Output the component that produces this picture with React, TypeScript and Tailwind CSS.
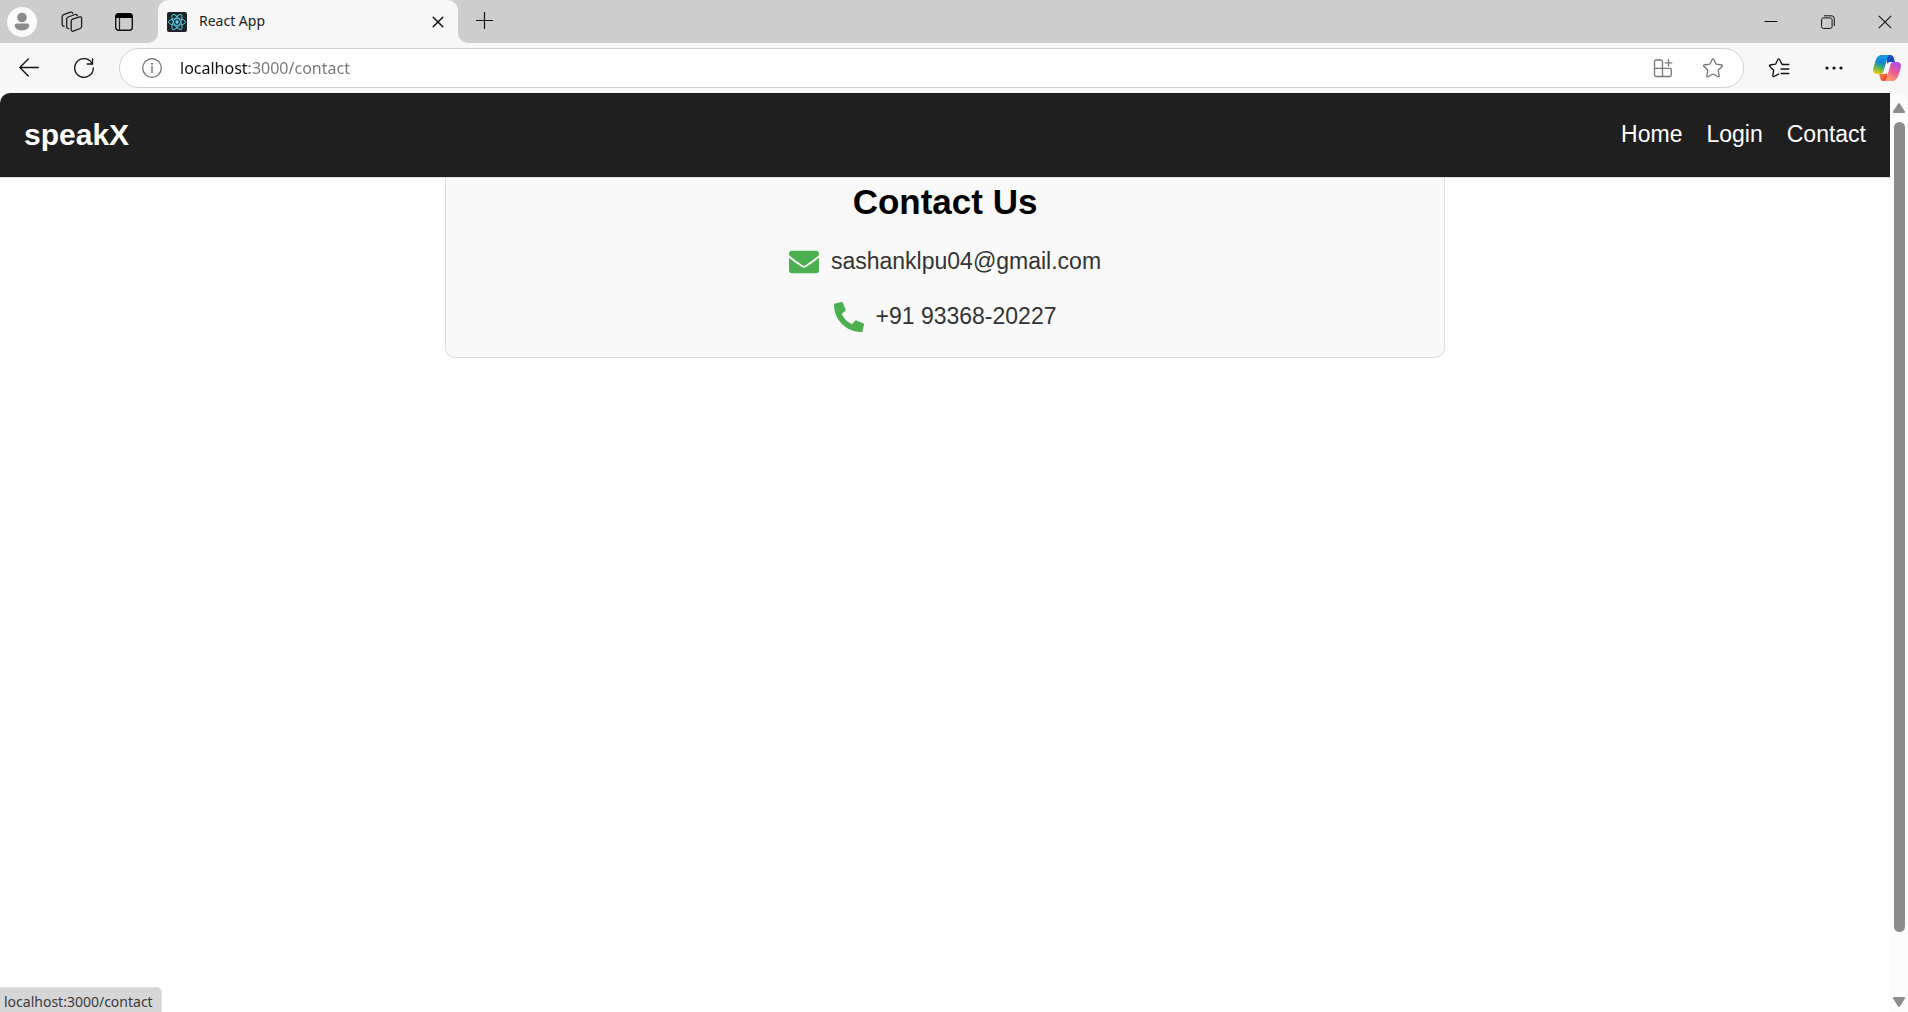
import React from "react";
import { FaEnvelope, FaPhoneAlt } from "react-icons/fa";

const iconButton = "flex shrink-0 items-center justify-center";

function WorkspacesIcon() {
  return (
    <svg width="22" height="22" viewBox="0 0 22 22" fill="none" stroke="#1b1b1b" strokeWidth="1.3" strokeLinecap="round" strokeLinejoin="round">
      <path d="M11.600 8.100l7-2.300a1.500 1.500 0 0 1 2 1.500v8.300a2 2 0 0 1-1.400 1.900l-7 2.700a1.500 1.500 0 0 1-2-1.400v-8.800a2 2 0 0 1 1.400-1.900z" />
      <path d="M7.700 17.500a1.700 1.700 0 0 1-2-1.700V7.900a2 2 0 0 1 1.400-1.900l7-2.500a1.600 1.600 0 0 1 2.200 1.200" />
      <path d="M3.200 15.200a1.700 1.700 0 0 1-2-1.700V5.600a2 2 0 0 1 1.400-1.900l7-2.500a1.600 1.600 0 0 1 2.200 1.200" />
    </svg>
  );
}

function TabActionsIcon() {
  return (
    <svg width="18" height="18" viewBox="0 0 18 18" fill="none">
      <rect x=".7" y=".7" width="16.600" height="16.600" rx="2.800" stroke="#111" strokeWidth="1.400" />
      <path d="M.5 5V3A2.500 2.500 0 0 1 3 .5h12A2.500 2.500 0 0 1 17.500 3v2z" fill="#000" />
      <path d="M4.500 5v12" stroke="#222" strokeWidth="1.200" />
    </svg>
  );
}

function ReactLogo() {
  return (
    <svg width="20" height="20" viewBox="0 0 20 20" fill="none">
      <rect width="20" height="20" rx="2" fill="#20232a" />
      <g stroke="#58c4dc" strokeWidth="1">
        <ellipse cx="10" cy="10" rx="8.500" ry="3.300" />
        <ellipse cx="10" cy="10" rx="8.500" ry="3.300" transform="rotate(60 10 10)" />
        <ellipse cx="10" cy="10" rx="8.500" ry="3.300" transform="rotate(120 10 10)" />
      </g>
      <circle cx="10" cy="10" r="1.700" fill="#61dafb" />
    </svg>
  );
}

function BackIcon() {
  return (
    <svg width="20" height="20" viewBox="0 0 20 20" fill="none" stroke="#111" strokeWidth="1.300" strokeLinecap="round" strokeLinejoin="round">
      <path d="M19.300 9.500H.8M9.300 1L.8 9.500l8.500 8.500" />
    </svg>
  );
}

function RefreshIcon() {
  return (
    <svg width="20" height="20" viewBox="0 0 20 20" fill="none" stroke="#111" strokeWidth="1.300" strokeLinecap="round" strokeLinejoin="round">
      <path d="M19.300 10A9.300 9.300 0 1 1 17.600 4.600L18.500 6" />
      <path d="M18.500 .8V6h-5.300" />
    </svg>
  );
}

function InfoIcon() {
  return (
    <svg width="20" height="20" viewBox="0 0 20 20" fill="none">
      <circle cx="10" cy="10" r="9.300" stroke="#6b6b6b" strokeWidth="1.200" />
      <path d="M10 8.500v6" stroke="#6b6b6b" strokeWidth="1.400" strokeLinecap="round" />
      <circle cx="10" cy="5.700" r="1" fill="#6b6b6b" />
    </svg>
  );
}

function AppAvailableIcon() {
  return (
    <svg width="20" height="20" viewBox="0 0 20 20" fill="none" stroke="#767676" strokeWidth="1.300" strokeLinecap="round">
      <path d="M9.500 10.300V3.500a1.500 1.500 0 0 0-1.500-1.500H3a1.500 1.500 0 0 0-1.500 1.500v13.200a1.800 1.800 0 0 0 1.800 1.800H16.500a1.800 1.800 0 0 0 1.800-1.800v-4.900a1.500 1.500 0 0 0-1.500-1.500H1.500M9.500 10.300v8.200" />
      <path d="M15.500 1.500v6.600M12.200 4.800h6.600" />
    </svg>
  );
}

function StarIcon() {
  return (
    <svg width="20" height="20" viewBox="0 0 20 20" fill="none" stroke="#767676" strokeWidth="1.300" strokeLinejoin="round">
      <path d="M9.300 1.200a.8.8 0 0 1 1.400 0l2.500 5 5.500.8a.8.8 0 0 1 .5 1.300l-4 3.900 1 5.700a.8.8 0 0 1-1.200.8L10 16l-5 2.700a.8.8 0 0 1-1.200-.8l1-5.700-4-3.900A.8.8 0 0 1 1.300 7l5.500-.8z" />
    </svg>
  );
}

function FavoritesIcon() {
  return (
    <svg width="22" height="20" viewBox="0 0 22 20" fill="none" stroke="#111" strokeWidth="1.300" strokeLinecap="round" strokeLinejoin="round">
      <path d="M10.500 16.100L6 18.500a.8.8 0 0 1-1.200-.8l.9-5.500-4-3.900A.8.8 0 0 1 2.100 7l5.500-.8 2.400-4.900a.8.8 0 0 1 1.400 0l2.500 4.900 1.300.2" />
      <path d="M14.500 6.500h6.300M13 11h7.800M13 15.500h7.800" />
    </svg>
  );
}

function CopilotIcon() {
  return (
    <svg width="28" height="26" viewBox="0 0 28 26">
      <defs>
        <linearGradient id="cpLeft" x1=".6" y1="0" x2=".3" y2="1">
          <stop offset="0" stopColor="#1a9bea" />
          <stop offset=".4" stopColor="#1683d0" />
          <stop offset=".68" stopColor="#4db45c" />
          <stop offset="1" stopColor="#f2c811" />
        </linearGradient>
        <linearGradient id="cpRight" x1=".8" y1="0" x2=".3" y2="1">
          <stop offset="0" stopColor="#a74bea" />
          <stop offset=".5" stopColor="#ea5a98" />
          <stop offset="1" stopColor="#ffa268" />
        </linearGradient>
        <linearGradient id="cpTop" x1="0" y1="0" x2="1" y2="1">
          <stop offset="0" stopColor="#1c55c8" />
          <stop offset="1" stopColor="#1a3fb8" />
        </linearGradient>
        <linearGradient id="cpBottom" x1="0" y1="0" x2="1" y2="1">
          <stop offset="0" stopColor="#fb8a3c" />
          <stop offset="1" stopColor="#e8402c" />
        </linearGradient>
      </defs>
      <path d="M13 0h4.500c1.700 0 2.600 1 3.100 2.600L22 7h-4.500c-1.500 0-2.500.6-3.300 1.800z" fill="url(#cpTop)" />
      <path d="M15 26h-4.500c-1.700 0-2.600-1-3.100-2.600L6 19h4.500c1.500 0 2.500-.6 3.300-1.800z" fill="url(#cpBottom)" />
      <path d="M16.800 0H8.600C5.400 0 3.600 2.700 2.400 6.300L.5 12.600C-.7 16.500.6 19 4 19h3.300c1.800 0 2.700-.9 3.300-2.700L14.300 3c.5-1.700 1.100-2.700 2.500-3z" fill="url(#cpLeft)" />
      <path d="M11.200 26h8.200c3.200 0 5-2.700 6.200-6.300l1.900-6.300C28.700 9.500 27.400 7 24 7h-3.300c-1.800 0-2.700.9-3.300 2.700L13.700 23c-.5 1.700-1.100 2.700-2.500 3z" fill="url(#cpRight)" />
      <path d="M17.800 8c-2 .2-3 1.200-3.600 3l-2.100 6.800c-.2.500-.4.800-.6 1.100 1.700-.1 3-.9 3.600-2.600l2-6.400c.2-.8.400-1.400.7-1.900z" fill="#f9f9f9" />
    </svg>
  );
}

function TitleBar() {
  return (
    <div className="flex h-[43px] shrink-0 bg-[#f7f7f7]">
      <div className="flex w-[158px] shrink-0 items-center rounded-br-[10px] bg-[#cdcdcd] pl-[7px]">
        <button aria-label="Profile" className={`${iconButton} size-[30px] rounded-full bg-[#fafafa]`}>
          <svg width="16" height="20" viewBox="0 0 16 20" fill="#8c8c8c">
            <circle cx="8" cy="5.500" r="4.800" />
            <path d="M2.500 11.500h11a1.800 1.800 0 0 1 1.800 1.800c0 3-3.200 5.200-7.300 5.200S.7 16.300.7 13.300a1.800 1.800 0 0 1 1.800-1.800z" />
          </svg>
        </button>
        <button aria-label="Workspaces" className={`${iconButton} ml-6 size-[22px]`}>
          <WorkspacesIcon />
        </button>
        <button aria-label="Tab actions" className={`${iconButton} ml-8 size-[18px]`}>
          <TabActionsIcon />
        </button>
      </div>
      <div className="w-[300px] shrink-0 bg-[#cdcdcd]">
        <div className="flex h-full items-center rounded-t-[10px] bg-[#f7f7f7] pr-3 pl-[9px]">
          <ReactLogo />
          <span className="ml-3 flex-1 pb-0.5 font-['Noto_Sans',sans-serif] text-[14px] leading-5 text-[#1b1b1b]">React App</span>
          <button aria-label="Close tab" className={`${iconButton} size-4`}>
            <svg width="12" height="12" viewBox="0 0 12 12" fill="none" stroke="#111" strokeWidth="1.500" strokeLinecap="round">
              <path d="M1.200 1.200l9.600 9.600M10.800 1.200l-9.600 9.600" />
            </svg>
          </button>
        </div>
      </div>
      <div className="flex flex-1 items-center rounded-bl-[10px] bg-[#cdcdcd] pr-4 pl-[18px]">
        <button aria-label="New tab" className={`${iconButton} size-[18px] pb-px`}>
          <svg width="18" height="18" viewBox="0 0 18 18" fill="none" stroke="#111" strokeWidth="1.200">
            <path d="M8.500 0v17M0 8.500h17" />
          </svg>
        </button>
        <div className="ml-auto flex items-center gap-[43px]">
          <button aria-label="Minimize" className={iconButton}>
            <svg width="14" height="14" viewBox="0 0 14 14" fill="none" stroke="#111">
              <path d="M.5 6.500h13" />
            </svg>
          </button>
          <button aria-label="Restore" className={iconButton}>
            <svg width="14" height="14" viewBox="0 0 14 14" fill="none" stroke="#111">
              <rect x=".6" y="2.900" width="10.500" height="10.500" rx="1.800" />
              <path d="M3 .8h7.500a2.800 2.800 0 0 1 2.800 2.800V11" />
            </svg>
          </button>
          <button aria-label="Close window" className={iconButton}>
            <svg width="14" height="14" viewBox="0 0 14 14" fill="none" stroke="#111" strokeWidth="1.100">
              <path d="M.8.800l12.400 12.400M13.200.800L.8 13.200" />
            </svg>
          </button>
        </div>
      </div>
    </div>
  );
}

function Toolbar() {
  return (
    <div className="flex h-[50px] shrink-0 items-center bg-[#f7f7f7] pr-[7px] pl-[19px]">
      <button aria-label="Back" className={iconButton}>
        <BackIcon />
      </button>
      <button aria-label="Refresh" className={`${iconButton} ml-[35px]`}>
        <RefreshIcon />
      </button>
      <div className="ml-[25px] flex h-10 flex-1 items-center rounded-full border border-[#cfcfcf] bg-white pr-5 pl-[22px]">
        <button aria-label="View site information" className={iconButton}>
          <InfoIcon />
        </button>
        <input
          aria-label="Address"
          defaultValue="localhost:3000/contact"
          className="mx-[18px] h-8 min-w-0 flex-1 bg-[linear-gradient(90deg,#111_69px,#757575_69px)] bg-clip-text font-['Noto_Sans',sans-serif] text-[16px] leading-8 text-transparent outline-none"
        />
        <button aria-label="App available" className={iconButton}>
          <AppAvailableIcon />
        </button>
        <button aria-label="Add to favorites" className={`${iconButton} ml-[30px]`}>
          <StarIcon />
        </button>
      </div>
      <button aria-label="Favorites" className={`${iconButton} ml-6`}>
        <FavoritesIcon />
      </button>
      <button aria-label="Settings and more" className={`${iconButton} ml-[35px]`}>
        <svg width="18" height="4" viewBox="0 0 18 4" fill="#111">
          <circle cx="2" cy="2" r="1.600" />
          <circle cx="9" cy="2" r="1.600" />
          <circle cx="16" cy="2" r="1.600" />
        </svg>
      </button>
      <button aria-label="Copilot" className={`${iconButton} ml-[30px]`}>
        <CopilotIcon />
      </button>
    </div>
  );
}

function ScrollBar() {
  return (
    <div aria-hidden="true" className="flex w-[18px] shrink-0 flex-col items-center rounded-tr-[10px] bg-[#fcfcfc] pt-[10px] pb-[5px]">
      <svg width="12" height="10" viewBox="0 0 12 10" fill="#8b8b8b">
        <path d="M5.200.6a1 1 0 0 1 1.600 0l5 7.600A1.100 1.100 0 0 1 10.900 10H1.100A1.100 1.100 0 0 1 .2 8.200z" />
      </svg>
      <div className="mt-[9px] mb-[65px] w-[11px] flex-1 rounded-full bg-[#8b8b8b]" />
      <svg width="12" height="10" viewBox="0 0 12 10" fill="#8b8b8b">
        <path d="M5.200 9.400a1 1 0 0 0 1.600 0l5-7.600A1.100 1.100 0 0 0 10.900 0H1.100A1.100 1.100 0 0 0 .2 1.800z" />
      </svg>
    </div>
  );
}

function ContactPage() {
  return (
    <div className="min-w-0 flex-1 bg-white font-['Liberation_Sans',Arial,sans-serif]">
      <header className="flex h-[85px] items-center justify-between rounded-tl-[10px] border-b border-[#dddddd] bg-[#1f1f1f] px-6 text-white">
        <a href="#home" className="text-[30px] leading-9 font-bold">speakX</a>
        <nav className="flex gap-6 pb-0.5 text-[23px] leading-7">
          <a href="#home">Home</a>
          <a href="#login">Login</a>
          <a href="#contact">Contact</a>
        </nav>
      </header>
      <main className="mx-auto flex w-full max-w-[1000px] flex-col items-center gap-[25px] rounded-b-[10px] border border-t-0 border-[#dddddd] bg-[#f9f9f9] pt-1 pb-[25px]">
        <h1 className="text-[35px] leading-10 font-bold text-black">Contact Us</h1>
        <div className="flex items-start gap-3 text-[23px] leading-7 text-[#333333]">
          <FaEnvelope size={30} color="#4caf50" />
          <span>sashanklpu04@gmail.com</span>
        </div>
        <div className="flex items-start gap-3 text-[23px] leading-7 text-[#333333]">
          <FaPhoneAlt size={30} color="#4caf50" />
          <span>+91 93368-20227</span>
        </div>
      </main>
    </div>
  );
}

export default function App() {
  return (
    <div className="flex h-screen flex-col overflow-hidden bg-[#f7f7f7]">
      <TitleBar />
      <Toolbar />
      <div className="flex min-h-0 flex-1">
        <ContactPage />
        <ScrollBar />
      </div>
      <div className="fixed bottom-0 left-0 rounded-tr-[5px] border-t border-r border-[#e2e2e2] bg-[#d6d6d6] pt-1 pr-2 pl-1 font-['Noto_Sans',sans-serif] text-[14px] leading-5 text-[#3a3a3a]">
        localhost:3000/contact
      </div>
    </div>
  );
}
